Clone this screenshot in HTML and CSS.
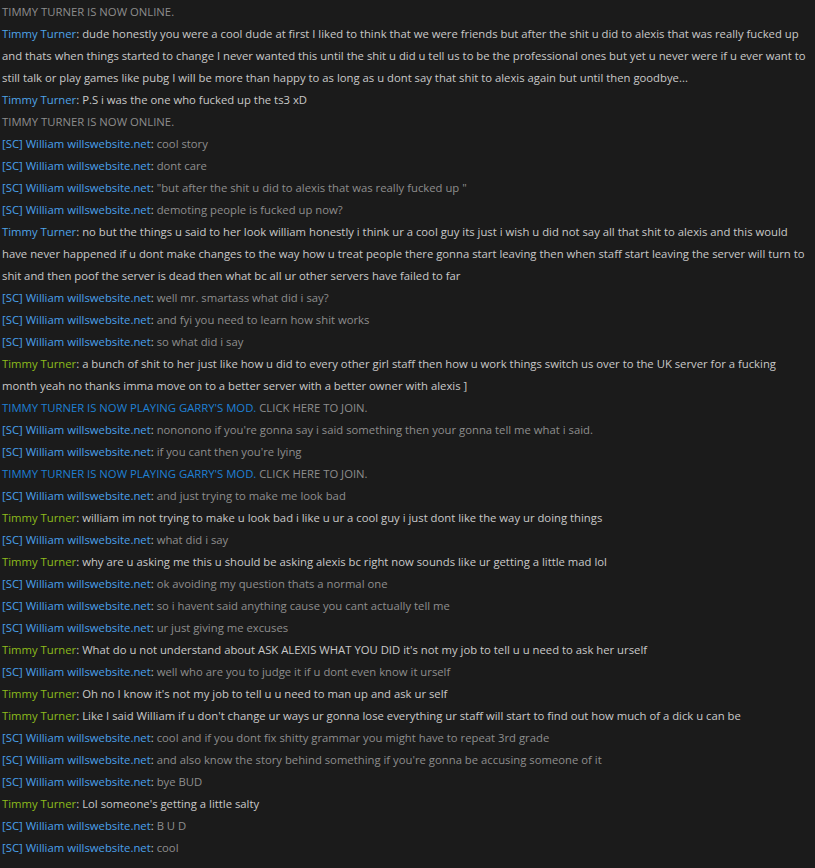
FILE: index.html
```html
<!DOCTYPE html>
<html>
<head>
<meta charset="utf-8">
<link rel="stylesheet" href="styles.css">
</head>
<body>
<div class="log">
<div class="line status">TIMMY TURNER IS NOW ONLINE.</div>
<div class="line bright"><span class="name blue">Timmy Turner</span><span class="colon">: </span>dude honestly you were a cool dude at first I liked to think that we were friends but after the shit u did to alexis that was really fucked up and thats when things started to change I never wanted this until the shit u did u tell us to be the professional ones but yet u never were if u ever want to still talk or play games like pubg I will be more than happy to as long as u dont say that shit to alexis again but until then goodbye...</div>
<div class="line bright"><span class="name blue">Timmy Turner</span><span class="colon">: </span>P.S i was the one who fucked up the ts3 xD</div>
<div class="line status">TIMMY TURNER IS NOW ONLINE.</div>
<div class="line dim"><span class="name will">[SC] William willswebsite.net</span><span class="colon">: </span>cool story</div>
<div class="line dim"><span class="name will">[SC] William willswebsite.net</span><span class="colon">: </span>dont care</div>
<div class="line dim"><span class="name will">[SC] William willswebsite.net</span><span class="colon">: </span>"but after the shit u did to alexis that was really fucked up "</div>
<div class="line dim"><span class="name will">[SC] William willswebsite.net</span><span class="colon">: </span>demoting people is fucked up now?</div>
<div class="line bright"><span class="name blue">Timmy Turner</span><span class="colon">: </span>no but the things u said to her look william honestly i think ur a cool guy its just i wish u did not say all that shit to alexis and this would have never happened if u dont make changes to the way how u treat people there gonna start leaving then when staff start leaving the server will turn to shit and then poof the server is dead then what bc all ur other servers have failed to far</div>
<div class="line dim"><span class="name will">[SC] William willswebsite.net</span><span class="colon">: </span>well mr. smartass what did i say?</div>
<div class="line dim"><span class="name will">[SC] William willswebsite.net</span><span class="colon">: </span>and fyi you need to learn how shit works</div>
<div class="line dim"><span class="name will">[SC] William willswebsite.net</span><span class="colon">: </span>so what did i say</div>
<div class="line bright"><span class="name green">Timmy Turner</span><span class="colon">: </span>a bunch of shit to her just like how u did to every other girl staff then how u work things switch us over to the UK server for a fucking month yeah no thanks imma move on to a better server with a better owner with alexis ]</div>
<div class="line status"><span class="playing">TIMMY TURNER IS NOW PLAYING GARRY'S MOD.</span> CLICK HERE TO JOIN.</div>
<div class="line dim"><span class="name will">[SC] William willswebsite.net</span><span class="colon">: </span>nononono if you're gonna say i said something then your gonna tell me what i said.</div>
<div class="line dim"><span class="name will">[SC] William willswebsite.net</span><span class="colon">: </span>if you cant then you're lying</div>
<div class="line status"><span class="playing">TIMMY TURNER IS NOW PLAYING GARRY'S MOD.</span> CLICK HERE TO JOIN.</div>
<div class="line dim"><span class="name will">[SC] William willswebsite.net</span><span class="colon">: </span>and just trying to make me look bad</div>
<div class="line bright"><span class="name green">Timmy Turner</span><span class="colon">: </span>william im not trying to make u look bad i like u ur a cool guy i just dont like the way ur doing things</div>
<div class="line dim"><span class="name will">[SC] William willswebsite.net</span><span class="colon">: </span>what did i say</div>
<div class="line bright"><span class="name green">Timmy Turner</span><span class="colon">: </span>why are u asking me this u should be asking alexis bc right now sounds like ur getting a little mad lol</div>
<div class="line dim"><span class="name will">[SC] William willswebsite.net</span><span class="colon">: </span>ok avoiding my question thats a normal one</div>
<div class="line dim"><span class="name will">[SC] William willswebsite.net</span><span class="colon">: </span>so i havent said anything cause you cant actually tell me</div>
<div class="line dim"><span class="name will">[SC] William willswebsite.net</span><span class="colon">: </span>ur just giving me excuses</div>
<div class="line bright"><span class="name green">Timmy Turner</span><span class="colon">: </span>What do u not understand about ASK ALEXIS WHAT YOU DID it's not my job to tell u u need to ask her urself</div>
<div class="line dim"><span class="name will">[SC] William willswebsite.net</span><span class="colon">: </span>well who are you to judge it if u dont even know it urself</div>
<div class="line bright"><span class="name green">Timmy Turner</span><span class="colon">: </span>Oh no I know it's not my job to tell u u need to man up and ask ur self</div>
<div class="line bright"><span class="name green">Timmy Turner</span><span class="colon">: </span>Like I said William if u don't change ur ways ur gonna lose everything ur staff will start to find out how much of a dick u can be</div>
<div class="line dim"><span class="name will">[SC] William willswebsite.net</span><span class="colon">: </span>cool and if you dont fix shitty grammar you might have to repeat 3rd grade</div>
<div class="line dim"><span class="name will">[SC] William willswebsite.net</span><span class="colon">: </span>and also know the story behind something if you're gonna be accusing someone of it</div>
<div class="line dim"><span class="name will">[SC] William willswebsite.net</span><span class="colon">: </span>bye BUD</div>
<div class="line bright"><span class="name green">Timmy Turner</span><span class="colon">: </span>Lol someone's getting a little salty</div>
<div class="line dim"><span class="name will">[SC] William willswebsite.net</span><span class="colon">: </span>B U D</div>
<div class="line dim"><span class="name will">[SC] William willswebsite.net</span><span class="colon">: </span>cool</div>
</div>
</body>
</html>
```
FILE: styles.css
```css
html, body {
  margin: 0;
  padding: 0;
  background: #1b1b1b;
}
.log {
  padding: 1px 8px 0 2px;
  font-family: "Open Sans", "Noto Sans", sans-serif;
  font-size: 11.3px;
  line-height: 22px;
  color: #c6c6c6;
}
.line {
  margin: 0;
}
.status { color: #8d8d8d; }
.bright { color: #c9c9c9; }
.dim { color: #8e8e8e; }
.blue { color: #4fa4e8; }
.will { color: #4aa0ec; }
.green { color: #8dbb1c; }
.colon { color: #c6c6c6; }
.playing { color: #1f80d4; }
```
